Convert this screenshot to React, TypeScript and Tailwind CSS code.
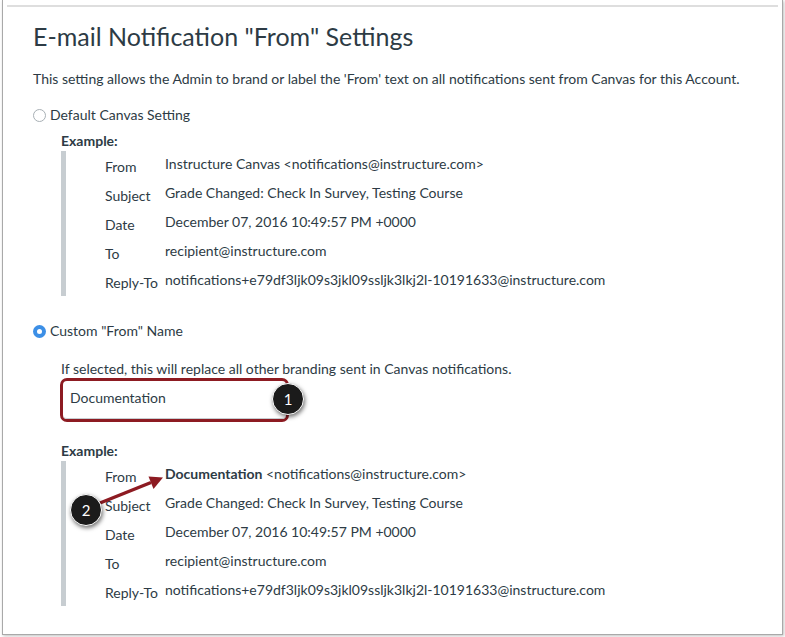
const rows = [
  { label: "From", value: "Instructure Canvas <notifications@instructure.com>" },
  { label: "Subject", value: "Grade Changed: Check In Survey, Testing Course" },
  { label: "Date", value: "December 07, 2016 10:49:57 PM +0000" },
  { label: "To", value: "recipient@instructure.com" },
  { label: "Reply-To", value: "notifications+e79df3ljk09s3jkl09ssljk3lkj2l-10191633@instructure.com" },
];

function ExampleBlock({ custom }: { custom?: boolean }) {
  return (
    <div className="border-l-[5px] border-[#c7cdd1] flex flex-col">
      {rows.map((r, i) => (
        <div key={r.label} className="h-[29px] flex">
          <div className="w-[99px] pl-[39px] pt-[6px] leading-[20px]">{r.label}</div>
          <div className="pt-[3px] leading-[20px] whitespace-nowrap">
            {custom && i === 0 ? (
              <>
                <span className="font-bold">Documentation</span> {"<notifications@instructure.com>"}
              </>
            ) : (
              r.value
            )}
          </div>
        </div>
      ))}
    </div>
  );
}

function Callout({ n }: { n: string }) {
  return (
    <div className="w-[32px] h-[32px] rounded-full bg-[#1b1b1b] border-[1.5px] border-white shadow-[1px_2px_4px_rgba(0,0,0,0.55)] flex items-center justify-center text-white text-[15px] font-['Lato']">
      {n}
    </div>
  );
}

export default function App() {
  return (
    <div className="w-[785px] h-[637px] bg-white font-['Lato','Liberation_Sans',sans-serif] text-[14px] text-[#2d3b45]">
      <div className="ml-[2px] w-[781px] h-[635px] border-x border-b border-[#a9a9a9] shadow-[1px_1px_3px_rgba(0,0,0,0.25)] flex flex-col">
        <div className="mt-[5px] mx-[4px] h-[2px] bg-[#dedede]" />
        <div className="pl-[30px] flex flex-col">
          <h1 className="mt-[14px] text-[25px] leading-[30px] font-normal">E-mail Notification "From" Settings</h1>
          <p className="mt-[18px] leading-[20px]">
            This setting allows the Admin to brand or label the 'From' text on all notifications sent from Canvas for this Account.
          </p>

          <label className="mt-[16px] flex items-center gap-[4px] leading-[20px]">
            <span className="w-[13px] h-[13px] rounded-full border border-[#a8b0b5] bg-white" />
            Default Canvas Setting
          </label>

          <div className="ml-[28px] flex flex-col">
            <div className="mt-[6px] font-bold leading-[20px]">Example:</div>
            <ExampleBlock />
          </div>

          <label className="mt-[25px] flex items-center gap-[4px] leading-[20px]">
            <span className="w-[13px] h-[13px] rounded-full bg-[#3c8fe6] flex items-center justify-center">
              <span className="w-[5px] h-[5px] rounded-full bg-white" />
            </span>
            Custom "From" Name
          </label>

          <div className="ml-[27px] flex flex-col">
            <p className="mt-[19px] ml-[1px] leading-[18px]">If selected, this will replace all other branding sent in Canvas notifications.</p>
            <div className="relative w-[229px] h-[44px] border-[3px] border-[#8d1b22] rounded-[7px]">
              <div className="h-full rounded-[4px] border-b border-[#c7cdd1] pl-[7px] pb-[4px] flex items-center">Documentation</div>
              <div className="absolute left-[209px] top-[2px]">
                <Callout n="1" />
              </div>
            </div>

            <div className="ml-[1px] mt-[19px] font-bold leading-[20px]">Example:</div>
            <div className="ml-[1px] relative">
              <ExampleBlock custom />
              <svg className="absolute left-0 top-0 pointer-events-none" width="120" height="60" viewBox="0 0 120 60">
                <line x1="39" y1="42" x2="90" y2="21.5" stroke="#8d1b22" strokeWidth="3.5" />
                <polygon points="102,16.5 92.5,28 87.5,15.5" fill="#8d1b22" />
              </svg>
              <div className="absolute left-[9px] top-[33px]">
                <Callout n="2" />
              </div>
            </div>
          </div>
        </div>
      </div>
    </div>
  );
}
